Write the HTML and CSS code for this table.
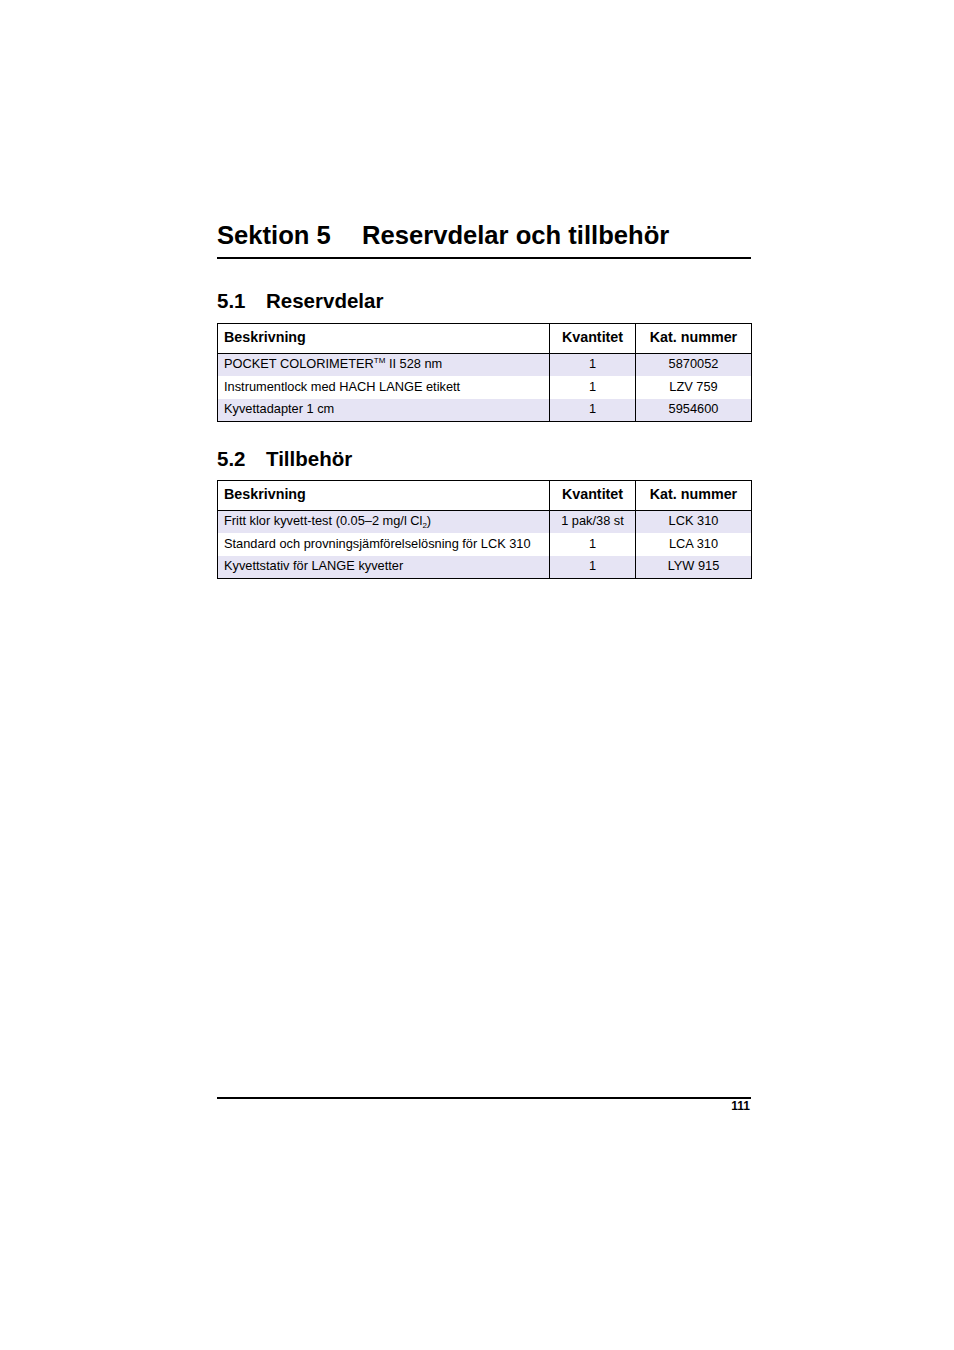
FILE: index.html
```html
<!DOCTYPE html>
<html lang="sv">
<head>
<meta charset="utf-8">
<title>Sektion 5 Reservdelar och tillbehör</title>
<link rel="stylesheet" href="styles.css">
</head>
<body>
<div class="page">
  <main class="content">
    <h1 class="chapter"><span class="chapter-num">Sektion 5</span>Reservdelar och tillbehör</h1>

    <h2 class="section"><span class="section-num">5.1</span>Reservdelar</h2>
    <table class="parts">
      <colgroup><col class="c1"><col class="c2"><col class="c3"></colgroup>
      <thead>
        <tr><th class="desc">Beskrivning</th><th>Kvantitet</th><th>Kat. nummer</th></tr>
      </thead>
      <tbody>
        <tr class="shade"><td class="desc">POCKET COLORIMETER<sup>TM</sup> II 528 nm</td><td>1</td><td>5870052</td></tr>
        <tr class="mid"><td class="desc">Instrumentlock med HACH LANGE etikett</td><td>1</td><td>LZV 759</td></tr>
        <tr class="shade last"><td class="desc">Kyvettadapter 1 cm</td><td>1</td><td>5954600</td></tr>
      </tbody>
    </table>

    <h2 class="section second"><span class="section-num">5.2</span>Tillbehör</h2>
    <table class="parts">
      <colgroup><col class="c1"><col class="c2"><col class="c3"></colgroup>
      <thead>
        <tr><th class="desc">Beskrivning</th><th>Kvantitet</th><th>Kat. nummer</th></tr>
      </thead>
      <tbody>
        <tr class="shade"><td class="desc">Fritt klor kyvett-test (0.05–2 mg/l Cl<sub>2</sub>)</td><td>1 pak/38 st</td><td>LCK 310</td></tr>
        <tr class="mid"><td class="desc">Standard och provningsjämförelselösning för LCK 310</td><td>1</td><td>LCA 310</td></tr>
        <tr class="shade last"><td class="desc">Kyvettstativ för LANGE kyvetter</td><td>1</td><td>LYW 915</td></tr>
      </tbody>
    </table>
  </main>
  <footer class="footer"><span class="pageno">111</span></footer>
</div>
</body>
</html>
```
FILE: styles.css
```css
html, body {
  margin: 0;
  padding: 0;
  background: #ffffff;
}
body {
  font-family: "Liberation Sans", Arial, sans-serif;
  color: #000000;
}
.page {
  box-sizing: border-box;
  width: 954px;
  height: 1350px;
  padding: 220px 203px 237px 217px;
  display: flex;
  flex-direction: column;
}
.content {
  width: 534px;
}
.chapter {
  margin: 0;
  font-size: 25.6px;
  line-height: 30px;
  font-weight: bold;
  padding-bottom: 7px;
  border-bottom: 2px solid #000;
}
.chapter-num {
  display: inline-block;
  width: 145px;
}
.section {
  margin: 30px 0 10px 0;
  font-size: 20.5px;
  line-height: 24px;
  font-weight: bold;
}
.section.second {
  margin-top: 25px;
  margin-bottom: 9px;
}
.section-num {
  display: inline-block;
  width: 49px;
}
.parts {
  width: 534px;
  border-collapse: collapse;
  border: 1px solid #000;
  table-layout: fixed;
}
.parts .c1 { width: 332px; }
.parts .c2 { width: 86px; }
.parts .c3 { width: 116px; }
.parts th {
  box-sizing: border-box;
  height: 30px;
  padding: 0 0 3px 0;
  font-size: 14.3px;
  line-height: 17px;
  font-weight: bold;
  text-align: center;
  vertical-align: middle;
  border-left: 1px solid #000;
  border-bottom: 1px solid #000;
}
.parts td {
  box-sizing: border-box;
  height: 22px;
  padding: 0 0 2px 0;
  font-size: 12.8px;
  line-height: 15px;
  text-align: center;
  vertical-align: middle;
  border-left: 1px solid #000;
  white-space: nowrap;
}
.parts tr.mid td {
  height: 23px;
}
.parts tr.last td {
  height: 23px;
}
.parts .desc {
  text-align: left;
  padding-left: 6px;
}
.parts tr.shade td {
  background: #e6e4f4;
}
sup {
  font-size: 8px;
  vertical-align: 5px;
  line-height: 0;
}
sub {
  font-size: 8px;
  vertical-align: -3px;
  line-height: 0;
}
.footer {
  margin-top: auto;
  width: 534px;
  border-top: 2px solid #000;
  text-align: right;
  font-size: 12px;
  line-height: 14px;
  font-weight: bold;
}
.pageno {
  padding-right: 1px;
}
```
